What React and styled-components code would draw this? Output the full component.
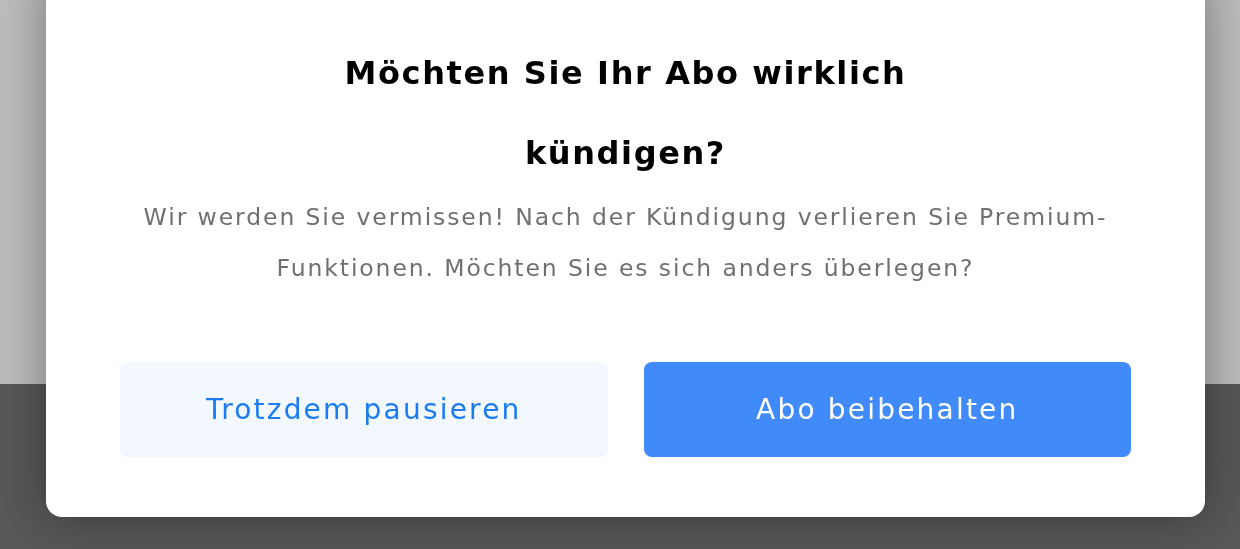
import React from "react";
import styled, { createGlobalStyle } from "styled-components";

const GlobalStyle = createGlobalStyle`
  html, body {
    margin: 0;
    padding: 0;
    height: 100%;
    overflow: hidden;
  }
  body {
    font-family: "DejaVu Sans", "Open Sans", sans-serif;
  }
  #root {
    height: 100%;
  }
`;

const Page = styled.div`
  height: 100%;
  display: flex;
  flex-direction: column;
`;

const TopBand = styled.div`
  height: 384px;
  background: #bdbdbd;
`;

const BottomBand = styled.div`
  flex: 1;
  background: #585858;
`;

const Overlay = styled.div`
  position: fixed;
  inset: 0;
  display: flex;
  align-items: flex-end;
  padding: 0 35px 32px 46px;
`;

const Modal = styled.div`
  flex: 1;
  background: #ffffff;
  border-radius: 16px;
  box-shadow: 0 0 50px rgba(0, 0, 0, 0.38);
  padding: 60px 74px 60px;
  display: flex;
  flex-direction: column;
  align-items: center;
`;

const Title = styled.h2`
  margin: 0;
  font-size: 32px;
  font-weight: 700;
  letter-spacing: 1.6px;
  line-height: 80px;
  color: #000;
  text-align: center;
  transform: translateY(1px);
`;

const Message = styled.p`
  margin: 0;
  font-size: 23.5px;
  font-weight: 400;
  letter-spacing: 1.9px;
  line-height: 51px;
  color: #707070;
  text-align: center;
  white-space: nowrap;
`;

const Actions = styled.div`
  align-self: stretch;
  margin-top: 68px;
  display: grid;
  grid-template-columns: 1fr 1fr;
  gap: 36px;
`;

const Button = styled.button`
  height: 95px;
  border: none;
  border-radius: 8px;
  font-family: inherit;
  font-size: 28px;
  font-weight: 400;
  letter-spacing: 2.2px;
  cursor: pointer;
  background: ${(p) => (p.$primary ? "#418af9" : "#f3f8ff")};
  color: ${(p) => (p.$primary ? "#ffffff" : "#1a7cf0")};
`;

export default function App() {
  return (
    <>
      <GlobalStyle />
      <Page>
        <TopBand />
        <BottomBand />
      </Page>
      <Overlay>
        <Modal role="dialog">
          <Title>
            Möchten Sie Ihr Abo wirklich
            <br />
            kündigen?
          </Title>
          <Message>
            Wir werden Sie vermissen! Nach der Kündigung verlieren Sie Premium-
            <br />
            Funktionen. Möchten Sie es sich anders überlegen?
          </Message>
          <Actions>
            <Button>Trotzdem pausieren</Button>
            <Button $primary>Abo beibehalten</Button>
          </Actions>
        </Modal>
      </Overlay>
    </>
  );
}
